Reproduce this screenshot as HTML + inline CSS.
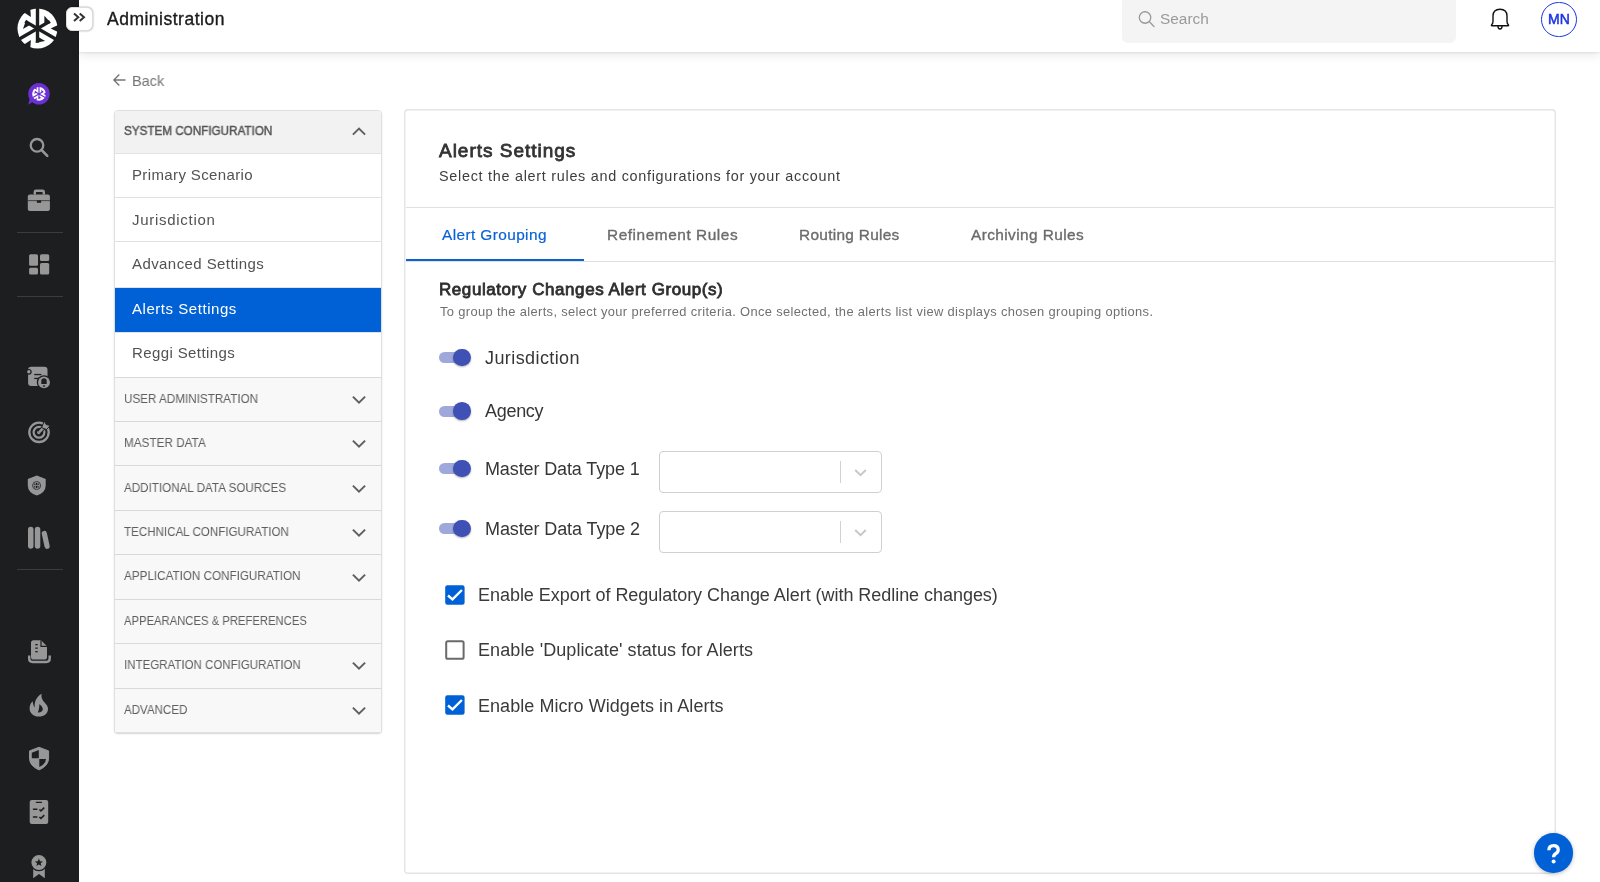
<!DOCTYPE html>
<html><head><meta charset="utf-8"><title>Administration</title>
<style>
html,body{margin:0;padding:0;width:1600px;height:882px;overflow:hidden;background:#fff;position:relative;font-family:"Liberation Sans",sans-serif}
.t{position:absolute;white-space:nowrap;font-family:"Liberation Sans",sans-serif;will-change:transform}
svg{overflow:visible}
</style></head><body>
<div style="position:absolute;left:0px;top:0px;width:79.2px;height:882px;background:#1d1e20"></div>
<div style="position:absolute;left:16.5px;top:231.5px;width:46.5px;height:1px;background:#3b3c3e"></div>
<div style="position:absolute;left:16.5px;top:295.5px;width:46.5px;height:1px;background:#3b3c3e"></div>
<div style="position:absolute;left:16.5px;top:568.5px;width:46.5px;height:1px;background:#3b3c3e"></div>
<svg style="position:absolute;left:14.6px;top:6.4px;" width="45" height="45" viewBox="0 0 45 45"><g transform="translate(22.5,22.5)"><circle r="20" fill="#fff"/>
<g fill="#1d1e20">
<circle r="2.6"/>
<g id="lgA">
<rect x="-1.7" y="-21" width="3.4" height="21"/>
<rect x="-1.7" y="-14.2" width="3.4" height="14.2" transform="rotate(60)"/>
<path d="M6.9,-12.8 L13.2,-5.4 L6.9,-3.4Z"/>
<path d="M21,-3.8 L13.2,0 L21,3.8Z"/>
</g>
<use href="#lgA" transform="rotate(120)"/>
<use href="#lgA" transform="rotate(240)"/>
</g></g></svg>
<svg style="position:absolute;left:28px;top:82.8px;" width="23" height="23" viewBox="0 0 23 23"><path d="M10.9,0.1 A10.75,10.75 0 1 1 4.2,19.2 L0.2,21.8 L1.6,16.2 A10.75,10.75 0 0 1 10.9,0.1Z" fill="#6b2fd3"/><g transform="translate(11,10.9) scale(0.34)"><circle r="20" fill="#fff"/>
<g fill="#6b2fd3">
<circle r="2.6"/>
<g id="lgB">
<rect x="-1.7" y="-21" width="3.4" height="21"/>
<rect x="-1.7" y="-14.2" width="3.4" height="14.2" transform="rotate(60)"/>
<path d="M6.9,-12.8 L13.2,-5.4 L6.9,-3.4Z"/>
<path d="M21,-3.8 L13.2,0 L21,3.8Z"/>
</g>
<use href="#lgB" transform="rotate(120)"/>
<use href="#lgB" transform="rotate(240)"/>
</g></g></svg>
<svg style="position:absolute;left:28px;top:136px;" width="22" height="22" viewBox="0 0 22 22"><circle cx="9" cy="9.3" r="6.3" fill="none" stroke="#979797" stroke-width="2.3"/><path d="M13.6,14 L19.3,19.8" stroke="#979797" stroke-width="2.5" stroke-linecap="round"/></svg>
<svg style="position:absolute;left:26px;top:187px;" width="26" height="26" viewBox="0 0 26 26"><path d="M8.8,7.5 V5 Q8.8,3.8 10,3.8 H16.6 Q17.8,3.8 17.8,5 V7.5" fill="none" stroke="#979797" stroke-width="2.4"/><rect x="1.8" y="7.4" width="22.1" height="16.6" rx="2" fill="#979797"/><rect x="1.8" y="13.4" width="22.1" height="0.7" fill="#1d1e20"/><rect x="10.9" y="13.4" width="4.2" height="2.4" fill="#1d1e20"/></svg>
<svg style="position:absolute;left:28px;top:253px;" width="22" height="22" viewBox="0 0 22 22"><rect x="1.1" y="1.2" width="8.9" height="11.6" rx="1.5" fill="#979797"/><rect x="1.1" y="14.8" width="8.9" height="6.7" rx="1.5" fill="#979797"/><rect x="12" y="1.2" width="9.2" height="6.7" rx="1.5" fill="#979797"/><rect x="12" y="10.1" width="9.2" height="11.4" rx="1.5" fill="#979797"/></svg>
<svg style="position:absolute;left:26px;top:364px;" width="26" height="26" viewBox="0 0 26 26"><rect x="2.1" y="2.7" width="19.4" height="19.2" rx="3.2" fill="#979797"/><circle cx="2.8" cy="7.8" r="2.9" fill="#1d1e20"/><circle cx="2.8" cy="7.8" r="1.7" fill="#979797"/><rect x="8.2" y="9.9" width="7.2" height="1.3" fill="#1d1e20"/><rect x="8.2" y="13.8" width="5" height="1.3" fill="#1d1e20"/><circle cx="18" cy="18.4" r="7.2" fill="#1d1e20"/><circle cx="18" cy="18.4" r="5.9" fill="#979797"/><path d="M15.3,19.9 V17 Q15.3,14.3 18,14.3 Q20.7,14.3 20.7,17 V19.9Z" fill="#1d1e20"/><ellipse cx="18" cy="22.1" rx="1.3" ry="0.75" fill="#1d1e20"/></svg>
<svg style="position:absolute;left:26px;top:420px;" width="26" height="26" viewBox="0 0 26 26"><circle cx="13" cy="12.3" r="9.7" fill="none" stroke="#979797" stroke-width="2.3"/><circle cx="13" cy="12.3" r="5.4" fill="none" stroke="#979797" stroke-width="2.2"/><circle cx="13" cy="12.3" r="1.9" fill="#979797"/><path d="M13,12.3 L19.5,5.8" stroke="#1d1e20" stroke-width="4.6"/><path d="M13,12.3 L19.5,5.8" stroke="#979797" stroke-width="2.4"/><path d="M18.3,1 L20.2,4.6 L24.3,5.4 L20.5,9.6 L15.6,7.6Z" fill="#979797" stroke="#1d1e20" stroke-width="1"/></svg>
<svg style="position:absolute;left:26px;top:474px;" width="22" height="24" viewBox="0 0 22 24"><path d="M10.8,1.6 L19.7,5 V11.5 Q19.7,18.5 10.8,21.6 Q1.8,18.5 1.8,11.5 V5Z" fill="#979797"/><circle cx="10.6" cy="11.5" r="4.3" fill="#1d1e20"/><circle cx="10.6" cy="11.5" r="3.3" fill="none" stroke="#979797" stroke-width="0.8"/><ellipse cx="10.6" cy="11.5" rx="1.5" ry="3.3" fill="none" stroke="#979797" stroke-width="0.8"/><path d="M7.2,11.5 H14" stroke="#979797" stroke-width="0.8"/></svg>
<svg style="position:absolute;left:26px;top:524px;" width="24" height="28" viewBox="0 0 24 28"><rect x="2" y="2.8" width="5.5" height="22" rx="2.7" fill="#979797"/><rect x="8.8" y="2.8" width="5.5" height="22" rx="2.7" fill="#979797"/><path d="M18.3,9.5 L21.1,22.3" stroke="#979797" stroke-width="5.2" stroke-linecap="round"/></svg>
<svg style="position:absolute;left:26px;top:638px;" width="26" height="28" viewBox="0 0 26 28"><path d="M5,5 Q5,2.3 7.7,2.3 H15 L21,8.3 V19 Q21,21.6 18.4,21.6 H7.7 Q5,21.6 5,19Z" fill="#979797"/><path d="M15,2.3 V8.3 H21" fill="none" stroke="#1d1e20" stroke-width="1.2"/><rect x="9.3" y="6" width="2.4" height="1.3" fill="#1d1e20"/><rect x="9.3" y="9.5" width="2.4" height="1.3" fill="#1d1e20"/><rect x="9.3" y="13" width="2.4" height="1.3" fill="#1d1e20"/><path d="M3.2,17.5 V20.6 Q3.2,24 6.6,24 H20.3 Q23.7,24 23.7,20.6 V17.5" fill="none" stroke="#979797" stroke-width="2.4"/></svg>
<svg style="position:absolute;left:26px;top:692px;" width="26" height="26" viewBox="0 0 26 26"><path d="M15.6,1.7 C15,5 16,8 19,11 C21,13 22,15 22,17 C22,21.5 18,24.6 12.9,24.6 C7.5,24.6 3.6,21 3.6,16.5 C3.6,13 5,10.5 6.8,9.2 C6.8,11.5 7.5,13.8 8.6,15.4 C8.6,13 8.6,10 10,7.5 C11.5,4.8 13.5,3 15.6,1.7Z M13.3,12.3 C13.5,15 12.8,18 11.9,20.4 C14.5,20.6 16.8,19.5 16.8,17.3 C16.8,15.5 15.3,13.5 13.3,12.3Z" fill="#979797" fill-rule="evenodd"/></svg>
<svg style="position:absolute;left:26px;top:745px;" width="26" height="28" viewBox="0 0 26 28"><path d="M13.05,2.3 L22.6,5.9 V13 Q22.6,21 13.05,24.9 Q3.5,21 3.5,13 V5.9Z" fill="#979797" stroke="#979797" stroke-width="1" stroke-linejoin="round"/><path d="M12.8,5 L5.8,7.7 V13.2 H12.8Z M13.3,13.9 H20 Q19.3,19.6 13.3,22.1Z" fill="#1d1e20"/></svg>
<svg style="position:absolute;left:26px;top:798px;" width="26" height="28" viewBox="0 0 26 28"><rect x="3.7" y="1.9" width="18.5" height="24" rx="2.2" fill="#979797"/><path d="M10.3,4.3 H15.5" stroke="#1d1e20" stroke-width="1.3" stroke-linecap="round"/><path d="M6.9,11.3 H11.4 M6.9,18.9 H11.4" stroke="#1d1e20" stroke-width="1.5"/><path d="M13.4,11.5 L14.9,12.9 L18.3,9.6 M13.4,19 L14.9,20.4 L18.3,17.1" fill="none" stroke="#1d1e20" stroke-width="1.5"/></svg>
<svg style="position:absolute;left:26px;top:850px;" width="26" height="32" viewBox="0 0 26 32"><path d="M7.2,17 V28.3 L13,23.9 L18.8,28.3 V17Z" fill="#979797"/><circle cx="12.9" cy="12.5" r="8.1" fill="#979797" stroke="#1d1e20" stroke-width="1.2"/><path d="M12.9,8.6 L14,11.3 L16.9,11.5 L14.7,13.3 L15.4,16.1 L12.9,14.6 L10.4,16.1 L11.1,13.3 L8.9,11.5 L11.8,11.3Z" fill="#1d1e20"/></svg>
<div style="position:absolute;left:79.2px;top:0px;width:1520.8px;height:51.8px;background:#fff;box-shadow:0 1px 2px rgba(0,0,0,0.08),0 3px 10px rgba(0,0,0,0.09)"></div>
<div style="position:absolute;left:66px;top:6.5px;width:27px;height:24px;background:#fff;border:1px solid #dcdcdc;border-radius:6px;box-sizing:border-box;box-shadow:0 0 2px rgba(0,0,0,.4)"></div>
<svg style="position:absolute;left:72px;top:11px;" width="16" height="14" viewBox="0 0 16 14"><path d="M2,2.5 L6.3,6.3 L2,10.1 M7.7,2.5 L12,6.3 L7.7,10.1" fill="none" stroke="#333" stroke-width="2" stroke-linejoin="miter"/></svg>
<div class="t" style="left:107px;top:10.52px;font-size:17.5px;line-height:17.5px;color:#1a1a1a;font-weight:400;letter-spacing:0.5px;-webkit-text-stroke:0.35px #1a1a1a">Administration</div>
<div style="position:absolute;left:1122px;top:-4px;width:333.5px;height:46.8px;background:#f4f4f4;border-radius:6px"></div>
<svg style="position:absolute;left:1136px;top:9px;" width="22" height="22" viewBox="0 0 22 22"><circle cx="9.05" cy="8.5" r="5.75" fill="none" stroke="#9a9a9a" stroke-width="1.3"/><path d="M13.4,12.8 L18,17.5" stroke="#9a9a9a" stroke-width="1.3" stroke-linecap="round"/></svg>
<div class="t" style="left:1159.7px;top:10.91px;font-size:15.4px;line-height:15.4px;color:#9a9a9a;font-weight:400;letter-spacing:0.0px;">Search</div>
<svg style="position:absolute;left:1488px;top:6px;" width="24" height="26" viewBox="0 0 24 26"><path d="M3.6,18.8 Q5,17.6 5,15.2 V10 Q5,3.2 12,3.2 Q19,3.2 19,10 V15.2 Q19,17.6 20.4,18.8 Q21,19.8 20,19.8 H4 Q3,19.8 3.6,18.8Z" fill="none" stroke="#111" stroke-width="1.4" stroke-linejoin="round"/><path d="M9.9,20 Q10,23 12,23 Q14,23 14.1,20" fill="none" stroke="#111" stroke-width="1.4"/></svg>
<div style="position:absolute;left:1541px;top:1.8px;width:35.5px;height:35.5px;border:1.6px solid #1a35e6;border-radius:50%;box-sizing:border-box"></div>
<div class="t" style="left:1547.6px;top:12.10px;font-size:14px;line-height:14px;color:#1a35e6;font-weight:400;letter-spacing:0.1px;-webkit-text-stroke:0.5px #1a35e6">MN</div>
<svg style="position:absolute;left:111px;top:71px;" width="18" height="18" viewBox="0 0 18 18"><path d="M14.5,9 H3 M8.3,3.6 L2.9,9 L8.3,14.4" fill="none" stroke="#757575" stroke-width="1.4"/></svg>
<div class="t" style="left:131.5px;top:73.62px;font-size:14.8px;line-height:14.8px;color:#757575;font-weight:400;letter-spacing:0px;transform:scaleX(0.98);transform-origin:0 0">Back</div>
<div style="position:absolute;left:113.5px;top:109.5px;width:268.5px;height:623.5px;border:1px solid #e0e0e0;border-radius:4px;box-sizing:border-box;background:#f8f8f8;box-shadow:0 1px 1.5px rgba(0,0,0,.16)"></div>
<div style="position:absolute;left:114.5px;top:110.5px;width:266.5px;height:43.5px;background:#f2f2f2;border-radius:3px 3px 0 0"></div>
<div class="t" style="left:123.8px;top:125.20px;font-size:12px;line-height:12px;color:#555;font-weight:400;letter-spacing:0px;-webkit-text-stroke:0.45px #555;transform:scaleX(0.9729);transform-origin:0 0">SYSTEM CONFIGURATION</div>
<svg style="position:absolute;left:350px;top:124px;" width="18" height="14" viewBox="0 0 18 14"><path d="M2.9,10.6 L9,4.6 L15.1,10.6" fill="none" stroke="#606060" stroke-width="2"/></svg>
<div style="position:absolute;left:114.5px;top:153.3px;width:266.5px;height:43.5px;background:#fff;border-top:1px solid #e2e2e2;box-sizing:border-box"></div>
<div class="t" style="left:132.4px;top:167.15px;font-size:15px;line-height:15px;color:#525252;font-weight:400;letter-spacing:0.37px;">Primary Scenario</div>
<div style="position:absolute;left:114.5px;top:196.8px;width:266.5px;height:44.0px;background:#fff;border-top:1px solid #e2e2e2;box-sizing:border-box"></div>
<div class="t" style="left:132.4px;top:211.65px;font-size:15px;line-height:15px;color:#525252;font-weight:400;letter-spacing:0.71px;">Jurisdiction</div>
<div style="position:absolute;left:114.5px;top:240.8px;width:266.5px;height:46.0px;background:#fff;border-top:1px solid #e2e2e2;box-sizing:border-box"></div>
<div class="t" style="left:132.4px;top:256.15px;font-size:15px;line-height:15px;color:#525252;font-weight:400;letter-spacing:0.42px;">Advanced Settings</div>
<div style="position:absolute;left:114.5px;top:286.8px;width:266.5px;height:44.89999999999998px;background:#0061d6;border-top:1px solid #e2e2e2;box-sizing:border-box"></div>
<div class="t" style="left:132.4px;top:300.65px;font-size:15px;line-height:15px;color:#fff;font-weight:400;letter-spacing:0.54px;">Alerts Settings</div>
<div style="position:absolute;left:114.5px;top:331.7px;width:266.5px;height:45.0px;background:#fff;border-top:1px solid #e2e2e2;box-sizing:border-box"></div>
<div class="t" style="left:132.4px;top:345.15px;font-size:15px;line-height:15px;color:#525252;font-weight:400;letter-spacing:0.39px;">Reggi Settings</div>
<div style="position:absolute;left:114.5px;top:376.7px;width:266.5px;height:44.30000000000001px;background:#f8f8f8;border-top:1px solid #d9d9d9;box-sizing:border-box"></div>
<div class="t" style="left:123.6px;top:392.60px;font-size:12.7px;line-height:12.7px;color:#5e5e5e;font-weight:400;letter-spacing:0px;transform:scaleX(0.9201);transform-origin:0 0">USER ADMINISTRATION</div>
<svg style="position:absolute;left:350px;top:391.7px;" width="18" height="14" viewBox="0 0 18 14"><path d="M2.9,4.6 L9,10.6 L15.1,4.6" fill="none" stroke="#606060" stroke-width="2"/></svg>
<div style="position:absolute;left:114.5px;top:421.0px;width:266.5px;height:44.39999999999998px;background:#f8f8f8;border-top:1px solid #d9d9d9;box-sizing:border-box"></div>
<div class="t" style="left:123.6px;top:437.05px;font-size:12.7px;line-height:12.7px;color:#5e5e5e;font-weight:400;letter-spacing:0px;transform:scaleX(0.9252);transform-origin:0 0">MASTER DATA</div>
<svg style="position:absolute;left:350px;top:436.15px;" width="18" height="14" viewBox="0 0 18 14"><path d="M2.9,4.6 L9,10.6 L15.1,4.6" fill="none" stroke="#606060" stroke-width="2"/></svg>
<div style="position:absolute;left:114.5px;top:465.4px;width:266.5px;height:44.400000000000034px;background:#f8f8f8;border-top:1px solid #d9d9d9;box-sizing:border-box"></div>
<div class="t" style="left:123.6px;top:481.50px;font-size:12.7px;line-height:12.7px;color:#5e5e5e;font-weight:400;letter-spacing:0px;transform:scaleX(0.9174);transform-origin:0 0">ADDITIONAL DATA SOURCES</div>
<svg style="position:absolute;left:350px;top:480.6px;" width="18" height="14" viewBox="0 0 18 14"><path d="M2.9,4.6 L9,10.6 L15.1,4.6" fill="none" stroke="#606060" stroke-width="2"/></svg>
<div style="position:absolute;left:114.5px;top:509.8px;width:266.5px;height:44.49999999999994px;background:#f8f8f8;border-top:1px solid #d9d9d9;box-sizing:border-box"></div>
<div class="t" style="left:123.6px;top:525.96px;font-size:12.7px;line-height:12.7px;color:#5e5e5e;font-weight:400;letter-spacing:0px;transform:scaleX(0.9135);transform-origin:0 0">TECHNICAL CONFIGURATION</div>
<svg style="position:absolute;left:350px;top:525.05px;" width="18" height="14" viewBox="0 0 18 14"><path d="M2.9,4.6 L9,10.6 L15.1,4.6" fill="none" stroke="#606060" stroke-width="2"/></svg>
<div style="position:absolute;left:114.5px;top:554.3px;width:266.5px;height:44.40000000000009px;background:#f8f8f8;border-top:1px solid #d9d9d9;box-sizing:border-box"></div>
<div class="t" style="left:123.6px;top:570.41px;font-size:12.7px;line-height:12.7px;color:#5e5e5e;font-weight:400;letter-spacing:0px;transform:scaleX(0.9195);transform-origin:0 0">APPLICATION CONFIGURATION</div>
<svg style="position:absolute;left:350px;top:569.5px;" width="18" height="14" viewBox="0 0 18 14"><path d="M2.9,4.6 L9,10.6 L15.1,4.6" fill="none" stroke="#606060" stroke-width="2"/></svg>
<div style="position:absolute;left:114.5px;top:598.7px;width:266.5px;height:44.5px;background:#f8f8f8;border-top:1px solid #d9d9d9;box-sizing:border-box"></div>
<div class="t" style="left:123.6px;top:614.86px;font-size:12.7px;line-height:12.7px;color:#5e5e5e;font-weight:400;letter-spacing:0px;transform:scaleX(0.8878);transform-origin:0 0">APPEARANCES &amp; PREFERENCES</div>
<div style="position:absolute;left:114.5px;top:643.2px;width:266.5px;height:44.5px;background:#f8f8f8;border-top:1px solid #d9d9d9;box-sizing:border-box"></div>
<div class="t" style="left:123.6px;top:659.31px;font-size:12.7px;line-height:12.7px;color:#5e5e5e;font-weight:400;letter-spacing:0px;transform:scaleX(0.9077);transform-origin:0 0">INTEGRATION CONFIGURATION</div>
<svg style="position:absolute;left:350px;top:658.4000000000001px;" width="18" height="14" viewBox="0 0 18 14"><path d="M2.9,4.6 L9,10.6 L15.1,4.6" fill="none" stroke="#606060" stroke-width="2"/></svg>
<div style="position:absolute;left:114.5px;top:687.7px;width:266.5px;height:44.299999999999955px;background:#f8f8f8;border-top:1px solid #d9d9d9;box-sizing:border-box"></div>
<div class="t" style="left:123.6px;top:703.75px;font-size:12.7px;line-height:12.7px;color:#5e5e5e;font-weight:400;letter-spacing:0px;transform:scaleX(0.9102);transform-origin:0 0">ADVANCED</div>
<svg style="position:absolute;left:350px;top:702.85px;" width="18" height="14" viewBox="0 0 18 14"><path d="M2.9,4.6 L9,10.6 L15.1,4.6" fill="none" stroke="#606060" stroke-width="2"/></svg>
<div style="position:absolute;left:404.3px;top:108.9px;width:1151.3px;height:765.6px;border-radius:4px;background:#fff;box-shadow:inset 0 0 0 1.4px #e4e4e4"></div>
<div class="t" style="left:439.4px;top:140.65px;font-size:19px;line-height:19px;color:#333;font-weight:400;letter-spacing:0.99px;-webkit-text-stroke:0.8px #333">Alerts Settings</div>
<div class="t" style="left:439.4px;top:168.66px;font-size:14.4px;line-height:14.4px;color:#3d3d3d;font-weight:400;letter-spacing:0.72px;">Select the alert rules and configurations for your account</div>
<div style="position:absolute;left:406px;top:207px;width:1148px;height:1px;background:#e0e0e0"></div>
<div style="position:absolute;left:406px;top:260.5px;width:1148px;height:1px;background:#e0e0e0"></div>
<div style="position:absolute;left:405.5px;top:258.8px;width:178px;height:2.3px;background:#0a62d6"></div>
<div class="t" style="left:441.7px;top:226.81px;font-size:15.4px;line-height:15.4px;color:#0a62d6;font-weight:400;letter-spacing:0.4px;-webkit-text-stroke:0.2px #0a62d6">Alert Grouping</div>
<div class="t" style="left:606.8px;top:226.81px;font-size:15.4px;line-height:15.4px;color:#6b6b6b;font-weight:400;letter-spacing:0.55px;-webkit-text-stroke:0.35px #6b6b6b">Refinement Rules</div>
<div class="t" style="left:799.4px;top:226.81px;font-size:15.4px;line-height:15.4px;color:#6b6b6b;font-weight:400;letter-spacing:0.3px;-webkit-text-stroke:0.35px #6b6b6b">Routing Rules</div>
<div class="t" style="left:971px;top:226.81px;font-size:15.4px;line-height:15.4px;color:#6b6b6b;font-weight:400;letter-spacing:0.41px;-webkit-text-stroke:0.35px #6b6b6b">Archiving Rules</div>
<div class="t" style="left:438.5px;top:281.45px;font-size:17px;line-height:17px;color:#2e2e2e;font-weight:400;letter-spacing:0.57px;-webkit-text-stroke:0.8px #2e2e2e">Regulatory Changes Alert Group(s)</div>
<div class="t" style="left:439.5px;top:306.24px;font-size:12.9px;line-height:12.9px;color:#707070;font-weight:400;letter-spacing:0.35px;">To group the alerts, select your preferred criteria. Once selected, the alerts list view displays chosen grouping options.</div>
<div style="position:absolute;left:439px;top:352.20000000000005px;width:31px;height:10.8px;background:#9fa8da;border-radius:6px"></div>
<div style="position:absolute;left:453.4px;top:348.8px;width:17.6px;height:17.6px;background:#3f51b5;border-radius:50%;box-shadow:0 1px 2px rgba(0,0,0,.3)"></div>
<div class="t" style="left:485px;top:348.70px;font-size:18px;line-height:18px;color:#363636;font-weight:400;letter-spacing:0.41px;">Jurisdiction</div>
<div style="position:absolute;left:439px;top:405.8px;width:31px;height:10.8px;background:#9fa8da;border-radius:6px"></div>
<div style="position:absolute;left:453.4px;top:402.4px;width:17.6px;height:17.6px;background:#3f51b5;border-radius:50%;box-shadow:0 1px 2px rgba(0,0,0,.3)"></div>
<div class="t" style="left:485px;top:402.30px;font-size:18px;line-height:18px;color:#363636;font-weight:400;letter-spacing:-0.3px;">Agency</div>
<div style="position:absolute;left:439px;top:463.3px;width:31px;height:10.8px;background:#9fa8da;border-radius:6px"></div>
<div style="position:absolute;left:453.4px;top:459.9px;width:17.6px;height:17.6px;background:#3f51b5;border-radius:50%;box-shadow:0 1px 2px rgba(0,0,0,.3)"></div>
<div class="t" style="left:485px;top:459.80px;font-size:18px;line-height:18px;color:#363636;font-weight:400;letter-spacing:-0.12px;">Master Data Type 1</div>
<div style="position:absolute;left:439px;top:523.3000000000001px;width:31px;height:10.8px;background:#9fa8da;border-radius:6px"></div>
<div style="position:absolute;left:453.4px;top:519.9000000000001px;width:17.6px;height:17.6px;background:#3f51b5;border-radius:50%;box-shadow:0 1px 2px rgba(0,0,0,.3)"></div>
<div class="t" style="left:485px;top:519.80px;font-size:18px;line-height:18px;color:#363636;font-weight:400;letter-spacing:-0.1px;">Master Data Type 2</div>
<div style="position:absolute;left:658.5px;top:451.0px;width:223px;height:42px;border:1px solid #d0d0d0;border-radius:4px;box-sizing:border-box;background:#fff"></div>
<div style="position:absolute;left:839.5px;top:461.0px;width:1.2px;height:22px;background:#d2d2d2"></div>
<svg style="position:absolute;left:850px;top:466.0px;" width="18" height="12" viewBox="0 0 18 12"><path d="M5.2,4 L10.5,9.2 L15.8,4" fill="none" stroke="#c8c8c8" stroke-width="2"/></svg>
<div style="position:absolute;left:658.5px;top:511.0px;width:223px;height:42px;border:1px solid #d0d0d0;border-radius:4px;box-sizing:border-box;background:#fff"></div>
<div style="position:absolute;left:839.5px;top:521.0px;width:1.2px;height:22px;background:#d2d2d2"></div>
<svg style="position:absolute;left:850px;top:526.0px;" width="18" height="12" viewBox="0 0 18 12"><path d="M5.2,4 L10.5,9.2 L15.8,4" fill="none" stroke="#c8c8c8" stroke-width="2"/></svg>
<svg style="position:absolute;left:444.6px;top:584.6px;" width="20" height="20" viewBox="0 0 20 20"><rect x="0.2" y="0.2" width="19.4" height="19.6" rx="2.2" fill="#0061d6"/><path d="M3,10.5 L7.5,14.4 L16.9,5" fill="none" stroke="#fff" stroke-width="2.4"/></svg>
<div class="t" style="left:477.5px;top:585.70px;font-size:18px;line-height:18px;color:#3a3a3a;font-weight:400;letter-spacing:-0.04px;">Enable Export of Regulatory Change Alert (with Redline changes)</div>
<svg style="position:absolute;left:444.6px;top:640px;" width="20" height="20" viewBox="0 0 20 20"><rect x="1.2" y="1.2" width="17.4" height="17.6" rx="1.6" fill="none" stroke="#6a6a6a" stroke-width="2"/></svg>
<div class="t" style="left:477.5px;top:641.10px;font-size:18px;line-height:18px;color:#3a3a3a;font-weight:400;letter-spacing:0.086px;">Enable 'Duplicate' status for Alerts</div>
<svg style="position:absolute;left:444.6px;top:695.4px;" width="20" height="20" viewBox="0 0 20 20"><rect x="0.2" y="0.2" width="19.4" height="19.6" rx="2.2" fill="#0061d6"/><path d="M3,10.5 L7.5,14.4 L16.9,5" fill="none" stroke="#fff" stroke-width="2.4"/></svg>
<div class="t" style="left:477.5px;top:696.50px;font-size:18px;line-height:18px;color:#3a3a3a;font-weight:400;letter-spacing:0.05px;">Enable Micro Widgets in Alerts</div>
<div style="position:absolute;left:1533.6px;top:833.4px;width:39.6px;height:39.6px;background:#0061d6;border-radius:50%;box-shadow:0 1px 4px rgba(0,0,0,.25)"></div>
<svg style="position:absolute;left:1543px;top:843px;" width="20" height="22" viewBox="0 0 20 22"><path d="M5.9,7.3 Q5.9,2.6 10.5,2.6 Q15.2,2.6 15.2,6.8 Q15.2,9.2 12.9,10.5 Q10.6,11.8 10.6,14.2" fill="none" stroke="#fff" stroke-width="3.3"/><circle cx="10.6" cy="18.6" r="2" fill="#fff"/></svg>
</body></html>
